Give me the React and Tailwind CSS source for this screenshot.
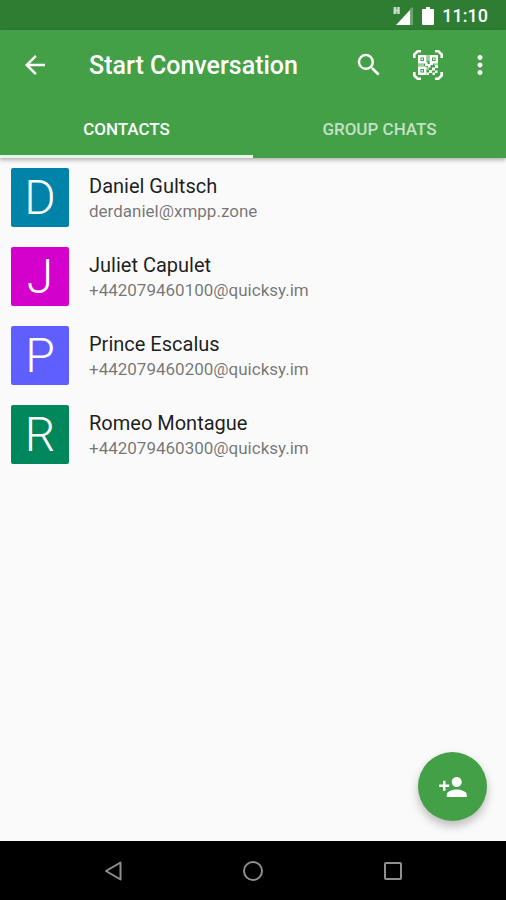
import { useState } from 'react';
import { MdArrowBack, MdSearch, MdMoreVert, MdPersonAddAlt1 } from 'react-icons/md';

const contacts = [
  { name: 'Daniel Gultsch', address: 'derdaniel@xmpp.zone', color: 'bg-[#0083a8]' },
  { name: 'Juliet Capulet', address: '+442079460100@quicksy.im', color: 'bg-[#d400cc]' },
  { name: 'Prince Escalus', address: '+442079460200@quicksy.im', color: 'bg-[#5f5fff]' },
  { name: 'Romeo Montague', address: '+442079460300@quicksy.im', color: 'bg-[#00875c]' },
];

const tabs = [
  { id: 'contacts', label: 'CONTACTS' },
  { id: 'groups', label: 'GROUP CHATS' },
];

const SignalIcon = () => (
  <svg width="21" height="18" viewBox="0 0 21 18" aria-hidden="true">
    <path d="M17 1.500 20 0v18h-3z" fill="#fff" fillOpacity="0.3" />
    <path d="M3 18 17 3v15z" fill="#fff" />
    <path d="M0 0h7v7H0z" fill="#fff" fillOpacity="0.35" />
    <path d="M1 0h2v2.500h1.500V0h2v7h-2V4.500H3V7H1z" fill="#fff" fillOpacity="0.6" />
  </svg>
);

const BatteryIcon = () => (
  <svg width="12" height="18" viewBox="0 0 12 18" fill="#fff" aria-hidden="true">
    <path d="M4 0h4v2h3q1 0 1 1v14q0 1-1 1H1q-1 0-1-1V3q0-1 1-1h3z" />
  </svg>
);

const QrScanIcon = () => (
  <svg width="30" height="30" viewBox="0 0 30 30" fill="none" aria-hidden="true">
    <path
      d="M1.300 8V4.500L4.500 1.300H8M22 1.300h3.500l3.200 3.200V8M28.700 22v3.500l-3.200 3.200H22M8 28.700H4.500l-3.200-3.200V22"
      stroke="#fff"
      strokeWidth="2.600"
      strokeLinejoin="round"
    />
    {/* finder squares */}
    <path d="M6.200 6.200h6v6h-6zM17.800 6.200h6v6h-6zM6.200 17.800h6v6h-6z" stroke="#fff" strokeWidth="2.400" />
    <path d="M8.400 8.400h1.600v1.600H8.400zM20 8.400h1.600v1.600H20zM8.400 20h1.600v1.600H8.400z" fill="#fff" />
    {/* data modules */}
    <path d="M13.500 5h3v6h-3zM5 13.500h6v3H5zM21 13.500h4v2h-4zM13 17h3v3h-3z" fill="#fff" fillOpacity="0.45" />
    <path
      d="M12 12h2.500v2H17v-1.500h3V15h-2.500v2.500H15V16h-3zM22 15h3v3h-3zM19 17.500h3v3h-3zM16 20h3v3h-3zM22 20.500h2.500V23H22zM13.500 22.500H16V25h-2.500zM19.500 22.500H22V25h-2.500z"
      fill="#fff"
    />
  </svg>
);

const App = () => {
  const [activeTab, setActiveTab] = useState('contacts');

  return (
    <div className="flex min-h-screen flex-col bg-[#fafafa] font-['Roboto',sans-serif]">
      {/* Status bar */}
      <div className="flex h-[30px] items-center justify-end bg-[#2e7d32] pt-0.5 pr-[18px] text-white">
        <SignalIcon />
        <span className="ml-2">
          <BatteryIcon />
        </span>
        <span className="ml-2 text-lg font-medium">11:10</span>
      </div>

      <header className="z-10 bg-[#43a047] text-white shadow-[0_2px_4px_rgba(0,0,0,0.3)]">
        <div className="flex h-[69px] items-center pr-1">
          <button aria-label="Back" className="flex h-[59px] w-[69px] items-center justify-center">
            <MdArrowBack size={30} />
          </button>
          <h1 className="ml-5 flex-1 pt-0.5 text-[25px] font-medium whitespace-nowrap">Start Conversation</h1>
          <button aria-label="Search" className="flex h-[59px] w-[59px] items-center justify-center">
            <MdSearch size={30} />
          </button>
          <button aria-label="Scan QR code" className="flex h-[59px] w-[59px] items-center justify-center">
            <QrScanIcon />
          </button>
          <button aria-label="More options" className="flex h-[59px] w-[45px] items-center justify-center">
            <MdMoreVert size={30} />
          </button>
        </div>

        <div role="tablist" className="grid grid-cols-2">
          {tabs.map((tab) => (
            <button
              key={tab.id}
              role="tab"
              aria-selected={activeTab === tab.id}
              onClick={() => setActiveTab(tab.id)}
              className={
                activeTab === tab.id
                  ? 'h-[59px] border-b-[3px] border-[#e8f5e9] pt-[5px] text-[17px] font-medium text-white'
                  : 'h-[59px] border-b-[3px] border-transparent pt-[5px] text-[17px] font-medium text-white/70'
              }
            >
              {tab.label}
            </button>
          ))}
        </div>
      </header>

      <main className="flex flex-1 flex-col">
        {activeTab === 'contacts' && (
          <ul>
            {contacts.map((contact) => (
              <li key={contact.address}>
                <a href="#chat" className="flex items-center gap-5 px-[11px] py-[10px]">
                  <span
                    className={`flex h-[59px] w-[58px] shrink-0 items-center justify-center rounded-xs text-[48px] leading-none font-light text-white ${contact.color}`}
                  >
                    {contact.name[0]}
                  </span>
                  <span className="flex min-w-0 flex-col">
                    <span className="truncate text-xl leading-[26px] text-black/90">{contact.name}</span>
                    <span className="truncate text-[17px] leading-6 text-black/55">{contact.address}</span>
                  </span>
                </a>
              </li>
            ))}
          </ul>
        )}

        <div className="sticky bottom-[59px] mt-auto flex justify-end pr-[19px] pb-5">
          <button
            aria-label="Add contact"
            className="flex h-[69px] w-[69px] items-center justify-center rounded-full bg-[#43a047] text-white shadow-[0_5px_10px_rgba(0,0,0,0.25)]"
          >
            <MdPersonAddAlt1 size={30} className="-scale-x-100" />
          </button>
        </div>
      </main>

      {/* System navigation */}
      <nav className="sticky bottom-0 flex h-[59px] items-center justify-center bg-black text-[#8f8f8f]">
        <button aria-label="System back" className="flex h-full w-[140px] items-center justify-center">
          <svg width="20" height="22" viewBox="0 0 20 22" fill="none" stroke="currentColor" strokeWidth="2">
            <path d="M17.500 2.500v17L3 11z" strokeLinejoin="round" />
          </svg>
        </button>
        <button aria-label="Home" className="flex h-full w-[140px] items-center justify-center">
          <svg width="22" height="22" viewBox="0 0 22 22" fill="none" stroke="currentColor" strokeWidth="2">
            <circle cx="11" cy="11" r="9" />
          </svg>
        </button>
        <button aria-label="Recent apps" className="flex h-full w-[140px] items-center justify-center">
          <svg width="20" height="20" viewBox="0 0 20 20" fill="none" stroke="currentColor" strokeWidth="2">
            <rect x="2" y="2" width="16" height="16" rx="1" />
          </svg>
        </button>
      </nav>
    </div>
  );
};

export default App;
